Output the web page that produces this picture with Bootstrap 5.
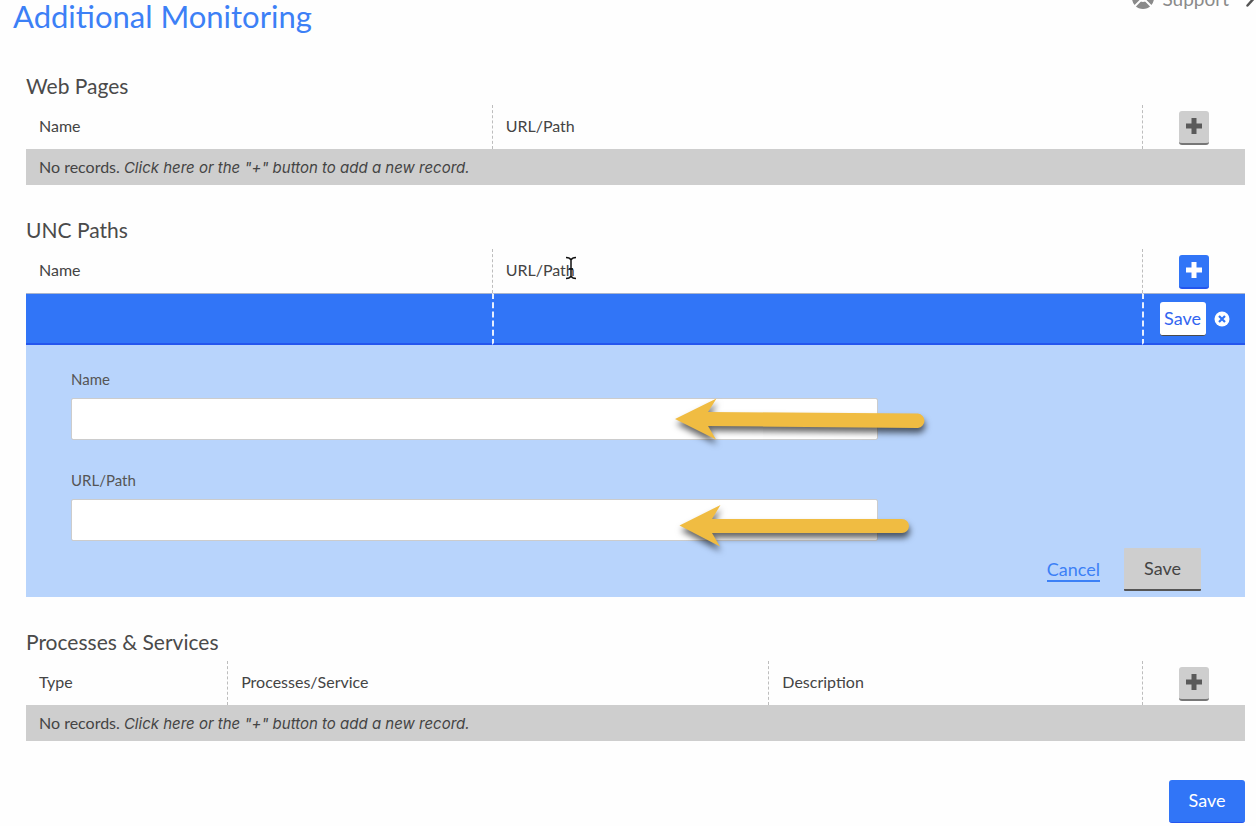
<!DOCTYPE html>
<html lang="en">
<head>
<meta charset="utf-8">
<meta name="viewport" content="width=device-width, initial-scale=1">
<title>Additional Monitoring</title>
<link href="https://cdn.jsdelivr.net/npm/bootstrap@5.3.0/dist/css/bootstrap.min.css" rel="stylesheet">
<style>
  body { font-family: Lato, "Open Sans", sans-serif; font-size: 15px; line-height: 20px; color: #444; background: #fefefe; }
  .page-body { padding: 42px 11px 3px 26px; }
  .page-top { height: 34px; padding-left: 13px; }
  .page-title { font-size: 31px; line-height: 32px; font-weight: 400; color: #3c80f6; }
  .top-links { margin-top: -11px; }
  .top-links a { font-size: 19px; line-height: 20px; color: #8a8a8a; text-decoration: none; }
  .top-links svg { display: block; }
  .section-title { font-size: 21px; line-height: 20px; font-weight: 400; color: #4a4a4a; margin-bottom: 9px; }
  .page-section { margin-bottom: 35px; }
  .record-table { width: 100%; table-layout: fixed; border-collapse: separate; border-spacing: 0; }
  .record-table th { height: 44px; padding: 0 12px 2px 13px; font-size: 16px; font-weight: 400; }
  .record-table th + th { border-left: 1px dashed #bdbdbd; }
  .record-table th:last-child { padding: 1px 0 0; }
  .record-table .col-name { width: 38.2%; }
  .record-table .col-type { width: 16.5%; }
  .record-table .col-process { width: 44.4%; }
  .record-table .col-action { width: 103px; }
  .empty-row td { height: 36px; padding: 0 13px; background: #cecece; font-size: 16px; }
  .empty-row em { font-family: Inter, sans-serif; font-size: 15px; }
  .edit-row td { height: 52px; padding: 0; background: #3175f7; border-top: 1px solid #a9b4cc; border-bottom: 2px solid #2456ee; }
  .edit-row td + td { border-left: 2px dashed #e6eefe; }
  .form-cell { background: #b8d4fc; padding: 24px 44px 6px 45px; }
  .field-label { display: block; margin-bottom: 9px; color: #555; }
  .field-box { position: relative; width: 71.4%; margin-bottom: 30px; }
  .field-last { margin-bottom: 7px; }
  .field-box .form-control { height: 42px; border: 1px solid #ccc; border-radius: 2px; }
  .arrow { position: absolute; top: -6px; right: -57px; pointer-events: none; filter: drop-shadow(1px 5px 3px rgba(0,0,0,.6)); }
  .text-cursor { position: absolute; left: 58px; top: -4px; }
  .btn-add { width: 30px; height: 34px; padding: 0 0 2px; border: 0; border-bottom: 2px solid #777; border-radius: 3px; background: #cecece; color: #5a5a5a; }
  .btn-add-active { background: #3175f7; border-color: #2456ee; color: #fff; }
  .btn-add svg { display: block; margin: auto; }
  .btn-flat { font-size: 18px; line-height: 20px; border: 0; border-radius: 3px; padding: 0 0 2px; }
  .btn-row { width: 46px; height: 34px; padding: 0; background: #fff; color: #3265f0; border-bottom: 1px solid #4b4b4b; }
  .btn-grey { width: 77px; height: 43px; background: #cecece; color: #444; border-bottom: 2px solid #555; border-radius: 1px; }
  .btn-blue { width: 76px; height: 43px; background: #3175f7; color: #fff; border-bottom: 1px solid #2456ee; }
  .cancel-link { font-size: 18px; line-height: 22px; color: #3c80f6; text-decoration: none; border-bottom: 2px solid #3c80f6; }
  .btn-icon { padding: 0; border: 0; background: none; line-height: 0; }
</style>
</head>
<body>
<header class="page-top d-flex justify-content-between align-items-start">
  <h1 class="page-title mb-0">Additional Monitoring</h1>
  <nav class="top-links d-flex align-items-start" aria-label="Help">
    <a href="#" class="d-flex gap-2 me-3">
      <svg width="22" height="20" viewBox="0 0 22 20" aria-hidden="true"><circle cx="11" cy="9" r="7.500" fill="none" stroke="#8a8a8a" stroke-width="7"/><path d="M2 0l18 18M20 0L2 18" stroke="#fefefe" stroke-width="2"/></svg>
      <span>Support</span>
    </a>
    <a href="#" aria-label="Close"><svg width="11" height="20" viewBox="0 0 11 20"><path d="M2.500 16.500L11 7" stroke="#555" stroke-width="2.500" fill="none" stroke-linecap="round"/></svg></a>
  </nav>
</header>

<main class="page-body">
  <section class="page-section">
    <h2 class="section-title">Web Pages</h2>
    <table class="record-table">
      <colgroup><col class="col-name"><col><col class="col-action"></colgroup>
      <thead><tr><th>Name</th><th>URL/Path</th>
        <th><button type="button" class="btn btn-add d-block mx-auto" aria-label="Add web page"><svg width="16" height="16" viewBox="0 0 16 16"><path d="M5.500 0h5v5.500H16v5h-5.500V16h-5v-5.500H0v-5h5.500z" fill="currentColor"/></svg></button></th></tr></thead>
      <tbody><tr class="empty-row"><td colspan="3">No records. <em>Click here or the "+" button to add a new record.</em></td></tr></tbody>
    </table>
  </section>

  <section class="page-section">
    <h2 class="section-title">UNC Paths</h2>
    <table class="record-table">
      <colgroup><col class="col-name"><col><col class="col-action"></colgroup>
      <thead><tr><th>Name</th>
        <th><span class="position-relative">URL/Path<svg class="text-cursor" width="14" height="24" viewBox="0 0 14 24" aria-hidden="true"><path d="M2 1.500Q6 1.500 7 4Q8 1.500 12 1.500M7 4V20M2 22.500Q6 22.500 7 20Q8 22.500 12 22.500M5 13h4" fill="none" stroke="#111" stroke-width="1.500"/></svg></span></th>
        <th><button type="button" class="btn btn-add btn-add-active d-block mx-auto" aria-label="Add UNC path"><svg width="16" height="16" viewBox="0 0 16 16"><path d="M5.500 0h5v5.500H16v5h-5.500V16h-5v-5.500H0v-5h5.500z" fill="currentColor"/></svg></button></th></tr></thead>
      <tbody>
        <tr class="edit-row"><td></td><td></td>
          <td><div class="d-flex align-items-center justify-content-center gap-2">
            <button type="button" class="btn btn-flat btn-row">Save</button>
            <button type="button" class="btn-icon" aria-label="Discard"><svg width="16" height="16" viewBox="0 0 16 16"><circle cx="8" cy="8" r="7.500" fill="#fff"/><path d="M5 5l6 6M11 5l-6 6" stroke="#3175f7" stroke-width="2.200"/></svg></button>
          </div></td></tr>
        <tr><td colspan="3" class="form-cell">
          <form>
            <label class="field-label" for="uncName">Name</label>
            <div class="field-box">
              <input type="text" class="form-control" id="uncName">
              <svg class="arrow" width="265" height="60" viewBox="0 0 265 60" aria-hidden="true"><path d="M5 27L46.500 6.500L38 20L248 21.500A7.300 7.300 0 0 1 248 36L38 34L46 47.500Z" fill="#f0bc42"/></svg>
            </div>
            <label class="field-label" for="uncPath">URL/Path</label>
            <div class="field-box field-last">
              <input type="text" class="form-control" id="uncPath">
              <svg class="arrow" width="265" height="60" viewBox="0 0 265 60" aria-hidden="true"><path d="M9.500 32.500L50.500 12L42 26H232A7 7 0 0 1 232 40H42L50 53.500Z" fill="#f0bc42"/></svg>
            </div>
            <div class="d-flex justify-content-end align-items-center gap-4">
              <a href="#" class="cancel-link">Cancel</a>
              <button type="button" class="btn btn-flat btn-grey">Save</button>
            </div>
          </form>
        </td></tr>
      </tbody>
    </table>
  </section>

  <section class="page-section">
    <h2 class="section-title">Processes &amp; Services</h2>
    <table class="record-table">
      <colgroup><col class="col-type"><col class="col-process"><col><col class="col-action"></colgroup>
      <thead><tr><th>Type</th><th>Processes/Service</th><th>Description</th>
        <th><button type="button" class="btn btn-add d-block mx-auto" aria-label="Add process or service"><svg width="16" height="16" viewBox="0 0 16 16"><path d="M5.500 0h5v5.500H16v5h-5.500V16h-5v-5.500H0v-5h5.500z" fill="currentColor"/></svg></button></th></tr></thead>
      <tbody><tr class="empty-row"><td colspan="4">No records. <em>Click here or the "+" button to add a new record.</em></td></tr></tbody>
    </table>
  </section>

  <div class="d-flex justify-content-end pt-1">
    <button type="button" class="btn btn-flat btn-blue">Save</button>
  </div>
</main>
<script src="https://cdn.jsdelivr.net/npm/bootstrap@5.3.0/dist/js/bootstrap.bundle.min.js"></script>
</body>
</html>
